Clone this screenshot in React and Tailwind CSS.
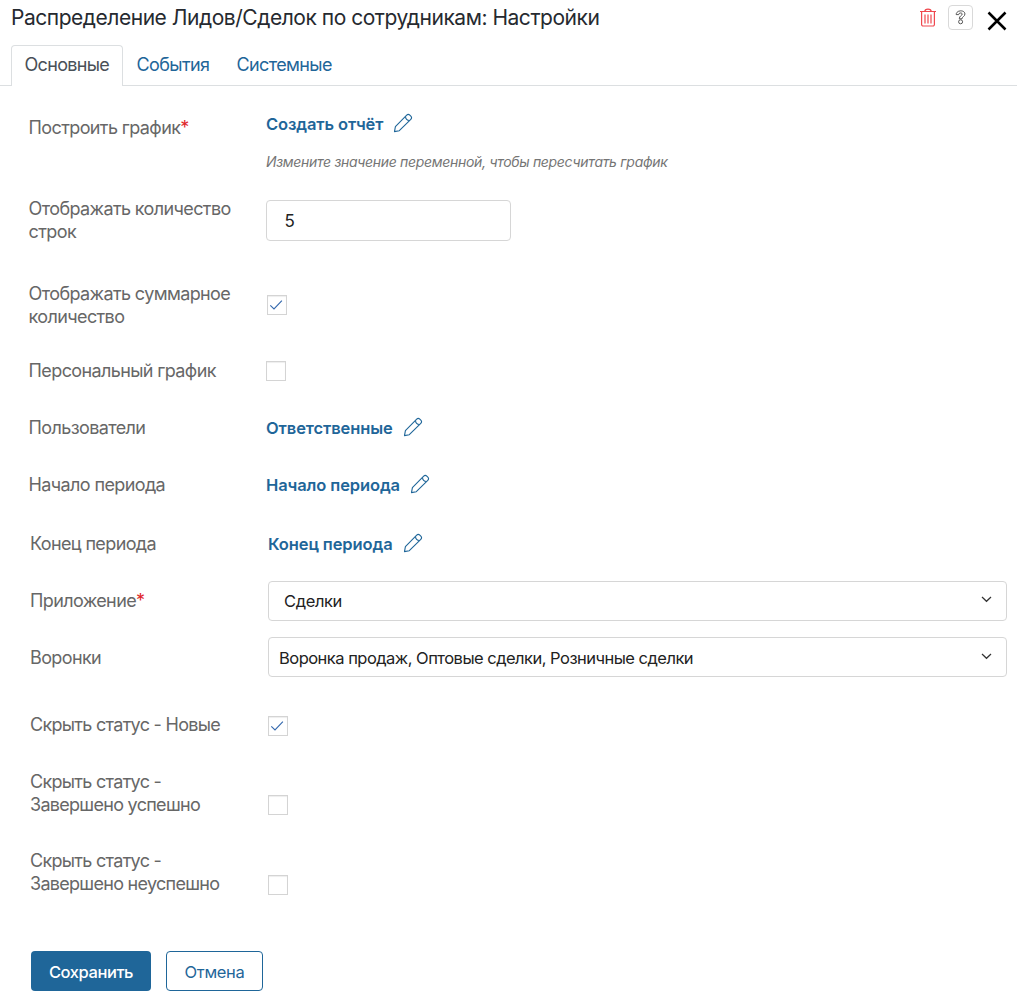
const LABEL = "text-[18px] leading-[23px] text-[#676767] whitespace-nowrap";

function Row({ height, labelTop, valueTop, late, tight, label, required, children }) {
  return (
    <div className={`flex items-start ${height} ${late ? "pl-[30px]" : "pl-[28px]"}`}>
      <div className={`w-[238px] shrink-0 ${late ? "" : "pl-[0.6px]"} ${tight ? "tracking-[-0.71px]" : "tracking-[-0.62px]"} ${labelTop} ${LABEL}`}>
        {label.map((line, i) => (
          <div key={line}>
            {line}
            {required && i === label.length - 1 && <span className="text-[#e0262b]">*</span>}
          </div>
        ))}
      </div>
      <div className={`min-w-0 flex-1 pr-[10px] ${valueTop}`}>{children}</div>
    </div>
  );
}

function Pencil() {
  return (
    <svg width="20" height="20" viewBox="0 0 20 20" fill="none" stroke="#1f6699" strokeWidth="1.1" strokeLinejoin="round" className="-mt-[2px] shrink-0">
      <path d="M1.500 18.600l.9-4.900L13.700 2.200a2.200 2.200 0 0 1 3.100 0l1 1a2.200 2.200 0 0 1 0 3.100L6.300 17.700z" />
      <path d="M12.500 3.500q.2 3.800 4.100 4" />
    </svg>
  );
}

function Link({ children }) {
  return (
    <div className="flex items-center gap-[10px]">
      <span className="whitespace-nowrap pt-[1px] text-[16.5px] font-semibold leading-[23px] tracking-[-0.11px] text-[#1f6699]">{children}</span>
      <Pencil />
    </div>
  );
}

function Check({ checked, className = "" }) {
  return (
    <div className={`flex size-[20px] items-center justify-center border border-[#d4d4d4] bg-white shadow-[inset_0_1px_1px_#eeeeee] ${className}`}>
      {checked && (
        <svg width="18" height="18" viewBox="0 0 18 18" fill="none" stroke="#3569ae" strokeWidth="1.1">
          <path d="M2.300 9.300l3.700 3.700L13.900 4.600" />
        </svg>
      )}
    </div>
  );
}

function Select({ pad, text, chevron, children }) {
  return (
    <div className={`flex h-[40px] items-center justify-between rounded-[4px] border border-[#d6d6d6] pr-[14px] ${pad}`}>
      <span className={`whitespace-nowrap text-[16.5px] leading-[23px] text-[#222] ${text}`}>{children}</span>
      <svg width="11" height="7" viewBox="0 0 11 7" fill="none" stroke="#333" strokeWidth="1.2" className={chevron}>
        <path d="M1 1l4.500 4.300L10 1" />
      </svg>
    </div>
  );
}

export default function App() {
  return (
    <div className="h-[1002px] w-[1017px] overflow-hidden bg-white font-['Inter',sans-serif]">
      <header className="flex h-[45px] items-start pl-[11px] pr-[10px]">
        <h1 className="flex-1 whitespace-nowrap pt-[4px] text-[21px] leading-[28px] tracking-[-0.47px] text-[#262a30]">
          Распределение Лидов/Сделок по сотрудникам: Настройки
        </h1>
        <svg width="16" height="19" viewBox="0 0 16 19" fill="none" stroke="#f0484e" strokeWidth="1.200" className="mt-[8px]">
          <path d="M0 3.500h16M4.800 3.500c0-3.300 6.400-3.300 6.400 0M1.600 3.500v13a1.500 1.500 0 0 0 1.500 1.500h9.800a1.500 1.500 0 0 0 1.500-1.500v-13M5 6.500v9M8 6.500v9M11 6.500v9" />
        </svg>
        <div className="ml-[12px] mt-[5px] flex size-[25px] items-center justify-center rounded-[4px] border border-[#d9d9d9]">
          <svg width="11" height="15" viewBox="0 0 11 15" fill="none" stroke="#444" strokeWidth="0.9">
            <path d="M1.200 4.600C1-.2 10-.4 9.900 4c0 2.600-2.700 2.500-2.900 4.800H4.300c-.1-3.100 2.900-3.100 2.900-4.700 0-1.600-3.500-1.600-3.500.5z" />
            <circle cx="5.600" cy="11.800" r="2" />
          </svg>
        </div>
        <svg width="20" height="20" viewBox="0 0 20 20" fill="none" stroke="#000" strokeWidth="2.500" className="ml-[14px] mt-[11px]">
          <path d="M1.500 1.500l17 17M18.500 1.500l-17 17" />
        </svg>
      </header>

      <nav className="flex h-[41px] text-[18px] leading-[23px] tracking-[-0.62px]">
        <div className="w-[11px] border-b border-[#dcdfe1]" />
        <div className="w-[112px] whitespace-nowrap rounded-t-[4px] border border-b-0 border-[#dcdfe1] pl-[12.5px] pt-[7px] tracking-[-0.68px] text-[#495057]">Основные</div>
        <div className="flex flex-1 border-b border-[#dcdfe1] pl-[13.500px] pt-[8px] text-[#1f6699]">
          <span className="w-[100px]">События</span>
          <span>Системные</span>
        </div>
      </nav>

      <main>
        <Row height="h-[98px]" labelTop="pt-[30px]" valueTop="pt-[26px]" label={["Построить график"]} required>
          <Link>Создать отчёт</Link>
          <p className="whitespace-nowrap pt-[16px] text-[14px] italic leading-[20px] tracking-[-0.31px] text-[#757575]">
            Измените значение переменной, чтобы пересчитать график
          </p>
        </Row>
        <Row height="h-[85px]" labelTop="pt-[13px]" valueTop="pt-[16px]" label={["Отображать количество", "строк"]}>
          <div className="flex h-[41px] w-[245px] items-center rounded-[4px] border border-[#d6d6d6] pl-[17.5px] pt-[2px] text-[17px] text-[#222]">5</div>
        </Row>
        <Row height="h-[77px]" labelTop="pt-[13px]" valueTop="pt-[26px]" label={["Отображать суммарное", "количество"]}>
          <Check checked className="ml-px" />
        </Row>
        <Row height="h-[53px]" labelTop="pt-[13px]" valueTop="pt-[15px]" label={["Персональный график"]}>
          <Check />
        </Row>
        <Row height="h-[57px]" labelTop="pt-[17px]" valueTop="pt-[17px]" label={["Пользователи"]}>
          <Link>Ответственные</Link>
        </Row>
        <Row height="h-[57px]" labelTop="pt-[17px]" valueTop="pt-[17px]" label={["Начало периода"]}>
          <Link>Начало периода</Link>
        </Row>
        <Row late height="h-[60px]" labelTop="pt-[19px]" valueTop="pt-[19px]" label={["Конец периода"]}>
          <Link>Конец периода</Link>
        </Row>
        <Row late height="h-[56px]" labelTop="pt-[16px]" valueTop="pt-[8px]" label={["Приложение"]} required>
          <Select pad="pl-[15px]" text="tracking-[-0.37px]" chevron="-mt-[3px]">Сделки</Select>
        </Row>
        <Row late height="h-[62px]" labelTop="pt-[17px]" valueTop="pt-[8px]" label={["Воронки"]}>
          <Select pad="pl-[10px]" text="pt-[2px] tracking-[-0.52px]" chevron="-mt-[1px]">Воронка продаж, Оптовые сделки, Розничные сделки</Select>
        </Row>
        <Row late tight height="h-[67px]" labelTop="pt-[22px]" valueTop="pt-[25px]" label={["Скрыть статус - Новые"]}>
          <Check checked />
        </Row>
        <Row late tight height="h-[79px]" labelTop="pt-[12px]" valueTop="pt-[37px]" label={["Скрыть статус -", "Завершено успешно"]}>
          <Check />
        </Row>
        <Row late tight height="h-[80px]" labelTop="pt-[12px]" valueTop="pt-[38px]" label={["Скрыть статус -", "Завершено неуспешно"]}>
          <Check />
        </Row>
      </main>

      <footer className="flex gap-[15px] pl-[31px] pt-[34px] text-[16.5px]">
        <button className="h-[40px] w-[120px] rounded-[4px] bg-[#1f6699] pt-[3px] font-medium tracking-[-0.43px] text-white">Сохранить</button>
        <button className="h-[40px] w-[97px] rounded-[4px] border border-[#1f6699] bg-white pt-[3px] tracking-[-0.3px] text-[#1f6699]">Отмена</button>
      </footer>
    </div>
  );
}
